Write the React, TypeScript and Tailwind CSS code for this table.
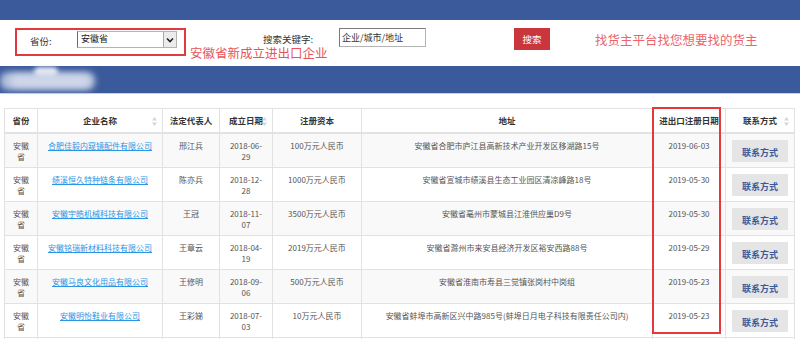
import React from 'react';

type Row = {
  name: string;
  person: string;
  founded: [string, string];
  capital: string;
  address: string;
  regDate: string;
};

const rows: Row[] = [
  { name: '合肥佳毅内窥镜配件有限公司', person: '邢江兵', founded: ['2018-06-', '29'], capital: '100万元人民币', address: '安徽省合肥市庐江县高新技术产业开发区移湖路15号', regDate: '2019-06-03' },
  { name: '绩溪恒久特种链条有限公司', person: '陈亦兵', founded: ['2018-12-', '28'], capital: '1000万元人民币', address: '安徽省宣城市绩溪县生态工业园区清凉峰路18号', regDate: '2019-05-30' },
  { name: '安徽宇皓机械科技有限公司', person: '王冠', founded: ['2018-11-', '07'], capital: '3500万元人民币', address: '安徽省亳州市蒙城县江淮供应巢D9号', regDate: '2019-05-30' },
  { name: '安徽铭瑞新材料科技有限公司', person: '王章云', founded: ['2018-04-', '19'], capital: '2019万元人民币', address: '安徽省滁州市来安县经济开发区裕安西路88号', regDate: '2019-05-29' },
  { name: '安徽马良文化用品有限公司', person: '王修明', founded: ['2018-09-', '06'], capital: '500万元人民币', address: '安徽省淮南市寿县三觉镇张岗村中岗组', regDate: '2019-05-23' },
  { name: '安徽明怡鞋业有限公司', person: '王彩娣', founded: ['2018-07-', '03'], capital: '10万元人民币', address: '安徽省蚌埠市高新区兴中路985号(蚌埠日月电子科技有限责任公司内)', regDate: '2019-05-23' },
];

function SortIcon() {
  return (
    <svg width="5" height="9" viewBox="0 0 5 9" className="absolute right-[5px] top-[8px]">
      <path d="M2.5 0 L5 3.5 L0 3.5 Z" fill="#d6d6d6" />
      <path d="M2.5 9 L5 5.5 L0 5.5 Z" fill="#d6d6d6" />
    </svg>
  );
}

function Th({ children, sort }: { children: React.ReactNode; sort?: boolean }) {
  return (
    <th className="relative h-[24px] border border-[#e2e2e2] border-b-2 text-center align-middle text-[8.5px] font-bold text-[#333] leading-[12px] p-0 whitespace-nowrap">
      {children}
      {sort && <SortIcon />}
    </th>
  );
}

const td = 'border border-[#e2e2e2] align-top text-center pt-[6px] pb-[5px] px-[4px] leading-[11px] text-[8px] text-[#555] h-[33px]';

export default function App() {
  return (
    <div className="w-[800px] h-[339px] overflow-hidden bg-white font-['Noto_Sans_CJK_SC',sans-serif]">
      {/* top bar */}
      <div className="h-[20px] bg-[#3b5a9b]" />

      {/* search band */}
      <div className="relative h-[46px] flex items-start">
        <div className="ml-[15px] mt-[8px] w-[171px] h-[28px] border-2 border-[#e0393e] flex items-start">
          <div className="w-[60px] pl-[13px] mt-[3px] text-[9.5px] leading-[16px] text-[#333]">省份:</div>
          <div className="mt-[1px] w-[100px] h-[17px] flex border border-[#b4b4b4] border-l-[#6a6a6a] bg-white">
            <div className="flex-1 pl-[3px] text-[9px] leading-[14px] text-[#222]">安徽省</div>
            <div className="w-[13px] h-full bg-[#ececec] border-l border-[#a8a8a8] flex items-center justify-center">
              <svg width="8" height="6" viewBox="0 0 8 6">
                <path d="M1 1.5 L4 4.5 L7 1.5" stroke="#222" strokeWidth="1.6" fill="none" />
              </svg>
            </div>
          </div>
        </div>
        <div className="ml-[77px] mt-[13px] w-[76px] text-[9.5px] leading-[12px] text-[#333] whitespace-nowrap">搜索关键字:</div>
        <div className="mt-[8px] w-[87px] h-[19px] border border-[#b4b4b4] border-t-[#7a7a7a] border-l-[#7a7a7a] pl-[2px] text-[9px] leading-[17px] text-[#333]">企业/城市/地址</div>
        <button className="ml-[88px] mt-[8px] w-[36px] h-[22px] bg-[#c9363b] text-white text-[9.5px] leading-[22px]">搜索</button>
        <div className="ml-[45px] mt-[12px] text-[12.5px] leading-[16px] text-[#e9646b] whitespace-nowrap">找货主平台找您想要找的货主</div>
        {/* annotation text over the band */}
        <div className="absolute left-[190px] top-[26px] text-[12.5px] leading-[14px] text-[#e8545a] whitespace-nowrap">安徽省新成立进出口企业</div>
      </div>

      {/* blue band with blurred logo */}
      <div className="h-[28px] bg-[#3b5a9b] border-b border-[#c8d0e2] flex">
        <div className="relative w-[100px] h-full">
          <div className="absolute left-[0px] top-[6px] w-[95px] h-[18px] rounded-[8px] bg-[#b3c0dc] blur-[3px]" />
          <div className="absolute left-[34px] top-[1px] w-[24px] h-[10px] rounded-full bg-[#e4e9f4] blur-[2px]" />
          <div className="absolute left-[10px] top-[9px] w-[80px] h-[12px] rounded-[6px] bg-[#cfd7ea] blur-[3px]" />
        </div>
      </div>

      {/* table */}
      <div className="relative ml-[4px] mt-[14px] w-[790px]">
        <table className="w-[790px] table-fixed border-collapse">
          <colgroup>
            <col className="w-[33px]" />
            <col className="w-[125px]" />
            <col className="w-[57px]" />
            <col className="w-[53px]" />
            <col className="w-[89px]" />
            <col className="w-[291px]" />
            <col className="w-[73px]" />
            <col className="w-[69px]" />
          </colgroup>
          <thead>
            <tr>
              <Th>省份</Th>
              <Th sort>企业名称</Th>
              <Th>法定代表人</Th>
              <Th sort>成立日期</Th>
              <Th>注册资本</Th>
              <Th>地址</Th>
              <Th>进出口注册日期</Th>
              <Th sort>联系方式</Th>
            </tr>
          </thead>
          <tbody>
            {rows.map((r, i) => (
              <tr key={i} className={i % 2 === 0 ? 'bg-[#f9f9f9]' : 'bg-white'}>
                <td className={td}>安徽<br />省</td>
                <td className={td}>
                  <a className="text-[#2b95e6] underline whitespace-nowrap">{r.name}</a>
                </td>
                <td className={td}>{r.person}</td>
                <td className={td}>{r.founded[0]}<br />{r.founded[1]}</td>
                <td className={td}>{r.capital}</td>
                <td className={td + ' whitespace-nowrap'}>{r.address}</td>
                <td className={td}>{r.regDate}</td>
                <td className="border border-[#e2e2e2] align-top text-center pt-[6px] h-[33px] p-0">
                  <div className="mx-auto w-[56px] h-[22px] bg-[#e5e5e5] text-[#3b5a9b] font-bold text-[9px] leading-[26px]">联系方式</div>
                </td>
              </tr>
            ))}
            <tr>
              {Array.from({ length: 8 }).map((_, k) => (
                <td key={k} className="border border-[#e2e2e2] h-[33px]" />
              ))}
            </tr>
          </tbody>
        </table>
        {/* highlight around register-date column */}
        <div className="absolute left-[648px] top-[-1px] w-[69px] h-[227px] border-2 border-[#e3393d]" />
      </div>
    </div>
  );
}
